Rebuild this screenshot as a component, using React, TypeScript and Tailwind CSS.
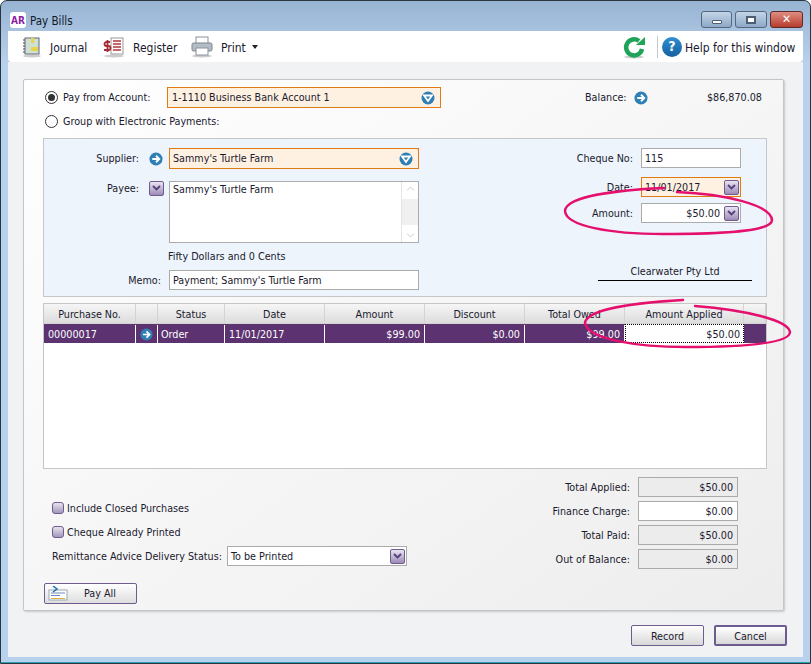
import React from 'react';

const ink = 'text-[#1a1a2e]';

function ArrowIcon({ size = 15 }: { size?: number }) {
  return (
    <svg width={size} height={size} viewBox="0 0 15 15" className="shrink-0">
      <circle cx="7.5" cy="7.5" r="7" fill="#2f7fb5" />
      <path d="M3.5 7.5h6.5M7.5 4l3.5 3.5L7.5 11" fill="none" stroke="#fff" strokeWidth="2" />
    </svg>
  );
}

function DownCircle() {
  return (
    <svg width="14" height="14" viewBox="0 0 14 14" className="shrink-0">
      <circle cx="7" cy="7" r="6.5" fill="#2f7fb5" />
      <path d="M3 4.5h8L7 10z" fill="none" stroke="#fff" strokeWidth="1.8" />
    </svg>
  );
}

function PurpleDrop() {
  return (
    <div className="flex h-[15px] w-[15px] shrink-0 items-center justify-center rounded-[2px] border border-[#6f5c8e] bg-gradient-to-b from-[#e9e4f0] to-[#9d8bb6]">
      <svg width="9" height="7" viewBox="0 0 9 7">
        <path d="M1 1l3.5 3.5L8 1" fill="none" stroke="#54407a" strokeWidth="1.8" />
      </svg>
    </div>
  );
}

function Check({ label }: { label: string }) {
  return (
    <div className="flex h-[16px] items-center pl-[9px]">
      <div className="h-[12px] w-[12px] rounded-[3px] border border-[#6f5c8e] bg-gradient-to-b from-[#e8e3ee] to-[#a597bb]" />
      <span className="ml-[3px]">{label}</span>
    </div>
  );
}

function Field({ children, className = '' }: { children?: React.ReactNode; className?: string }) {
  return (
    <div className={`flex items-center border border-[#ababab] px-[3px] ${className}`}>
      {children}
    </div>
  );
}

function TotalRow({ label, value, live }: { label: string; value: string; live?: boolean }) {
  return (
    <div className="flex h-[20px] items-center justify-end">
      <span className="mr-[8px]">{label}</span>
      <Field className={`h-[20px] w-[100px] justify-end pr-[4px] ${live ? 'bg-white' : 'bg-[#ececec]'}`}>{value}</Field>
    </div>
  );
}

const columns = [
  { name: 'Purchase No.', w: 'w-[92px]' },
  { name: '', w: 'w-[22px]' },
  { name: 'Status', w: 'w-[67px]' },
  { name: 'Date', w: 'w-[100px]' },
  { name: 'Amount', w: 'w-[100px]' },
  { name: 'Discount', w: 'w-[100px]' },
  { name: 'Total Owed', w: 'w-[100px]' },
  { name: 'Amount Applied', w: 'w-[119px]' },
  { name: '', w: 'flex-1' },
];

export default function App() {
  return (
    <div className="h-[664px] w-[811px] overflow-hidden bg-white font-['DejaVu_Sans_Condensed','Noto_Sans',sans-serif] text-[10.7px] leading-[13px] text-[#1a1a2e]">
      <div className="relative flex h-[664px] w-[811px] flex-col rounded-t-[7px] border border-[#2a3540] bg-[linear-gradient(#98b4d3,#b8d1ec_62px)] pr-[7px] pl-[7px]">
        {/* title bar */}
        <div className="flex h-[30px] shrink-0 items-end pb-[3px]">
          <div className="ml-[2px] flex h-[16px] w-[16px] items-center justify-center rounded-[3px] bg-white text-[10px] font-bold text-[#8a1fa5]">AR</div>
          <span className="ml-[4px] text-[11.5px] text-[#10182a]">Pay Bills</span>
          <div className="ml-auto flex gap-[3px]">
            <div className="flex h-[17px] w-[31px] items-center justify-center rounded-[3px] border border-[#55677c] bg-gradient-to-b from-[#c3d5e8] to-[#8ea9c6]">
              <div className="mt-[4px] h-[4px] w-[10px] rounded-[1px] border border-[#4c5e75] bg-white" />
            </div>
            <div className="flex h-[17px] w-[32px] items-center justify-center rounded-[3px] border border-[#55677c] bg-gradient-to-b from-[#c3d5e8] to-[#8ea9c6]">
              <div className="h-[8px] w-[10px] border-2 border-[#4c5e75] bg-white" />
            </div>
            <div className="flex h-[17px] w-[33px] items-center justify-center rounded-[3px] border border-[#5f2a28] bg-gradient-to-b from-[#dd8d80] to-[#b53a2c] text-[12px] font-bold text-white">✕</div>
          </div>
        </div>

        {/* toolbar */}
        <div className={`flex h-[31px] shrink-0 items-center rounded-b-[4px] bg-white text-[12px] ${ink}`}>
          <svg width="20" height="22" viewBox="0 0 20 22" className="ml-[14px]">
            <ellipse cx="10" cy="20" rx="9" ry="1.5" fill="#ccc" />
            <rect x="3" y="2" width="14" height="16" fill="#cfe0d4" stroke="#667" />
            <path d="M3 4h-2M3 7h-2M3 10h-2M3 13h-2M3 16h-2" stroke="#445" />
            <rect x="9" y="2" width="3" height="5" fill="#e8d44a" />
            <rect x="9" y="11" width="7" height="4" fill="#e8d44a" />
          </svg>
          <span className="mt-[3px] ml-[8px] w-[38px]">Journal</span>
          <svg width="22" height="22" viewBox="0 0 22 22" className="ml-[15px]">
            <ellipse cx="11" cy="20" rx="10" ry="1.5" fill="#ccc" />
            <rect x="8" y="2" width="12" height="16" fill="#fff" stroke="#999" />
            <path d="M10 5h8M10 8h8M10 11h8M10 14h8" stroke="#b3343c" strokeWidth="1.4" />
            <path d="M7 6H3.5a1.7 1.7 0 0 0 0 4h2a1.7 1.7 0 0 1 0 4H1M4.5 4v12" fill="none" stroke="#a82c35" strokeWidth="1.8" />
          </svg>
          <span className="mt-[3px] ml-[8px] w-[42px]">Register</span>
          <svg width="22" height="22" viewBox="0 0 22 22" className="ml-[16px]">
            <ellipse cx="11" cy="20" rx="10" ry="1.5" fill="#ccc" />
            <rect x="5" y="1" width="12" height="7" fill="#fff" stroke="#8a929c" />
            <rect x="1" y="7" width="20" height="8" rx="1.5" fill="#b4bcc5" stroke="#7d858f" />
            <rect x="5" y="12" width="12" height="7" fill="#fff" stroke="#8a929c" />
          </svg>
          <span className="mt-[3px] ml-[8px] w-[25px]">Print</span>
          <svg width="6" height="4" viewBox="0 0 6 4" className="ml-[6px]"><path d="M0 0h6L3 4z" fill="#222" /></svg>
          <svg width="24" height="24" viewBox="0 0 24 24" className="ml-auto">
            <ellipse cx="12" cy="22" rx="10" ry="1.5" fill="#ccc" />
            <path d="M20 14a8 8 0 1 1-3-8" fill="none" stroke="#1fa25a" strokeWidth="4.5" />
            <path d="M14 10h9V2z" fill="#1fa25a" />
          </svg>
          <div className="mr-[4px] ml-[11px] h-[22px] w-px bg-[#c4c8cc]" />
          <div className="flex h-[20px] w-[20px] items-center justify-center rounded-full bg-gradient-to-b from-[#2f8fd0] to-[#14609f] text-[14px] font-bold text-white">?</div>
          <span className="mt-[3px] ml-[3px] w-[118px]">Help for this window</span>
        </div>

        {/* content */}
        <div className="flex min-h-0 flex-1 flex-col bg-[#f1f2f4] pt-[17px] pr-[19px] pl-[15px]">
          <div className="h-[532px] shrink-0 rounded-[2px] border border-[#c4c6c8] bg-gradient-to-br from-white to-[#ededed] pt-[7px] pr-[16px] pl-[19px] shadow-[1px_1px_2px_#c8c8c8]">
            {/* account row */}
            <div className="flex h-[21px] items-center">
              <div className="ml-[2px] flex h-[13px] w-[13px] items-center justify-center rounded-full border border-[#333] bg-white">
                <div className="h-[7px] w-[7px] rounded-full bg-[#333]" />
              </div>
              <span className="ml-[5px] w-[104px]">Pay from Account:</span>
              <div className="flex h-[21px] w-[274px] items-center justify-between border border-[#e07a14] bg-[#fff1e2] pr-[5px] pl-[4px]">
                1-1110 Business Bank Account 1
                <DownCircle />
              </div>
              <span className="ml-[144px] w-[43px]">Balance:</span>
              <div className="ml-[6px]"><ArrowIcon size={14} /></div>
              <span className="mr-[5px] ml-auto">$86,870.08</span>
            </div>
            <div className="mt-[3px] flex h-[20px] items-center">
              <div className="ml-[2px] h-[13px] w-[13px] rounded-full border border-[#333] bg-white" />
              <span className="ml-[5px]">Group with Electronic Payments:</span>
            </div>

            {/* supplier box */}
            <div className="mt-[7px] flex h-[159px] justify-between border border-[#c4c6c8] bg-[#edf4fb] pt-[9px]">
              <div className="flex flex-col">
                <div className="flex h-[21px] items-center">
                  <span className="w-[95px] text-right">Supplier:</span>
                  <div className="ml-[10px] w-[20px]"><ArrowIcon size={14} /></div>
                  <div className="flex h-[21px] w-[250px] items-center justify-between border border-[#e07a14] bg-[#fff1e2] pr-[5px] pl-[3px]">
                    Sammy's Turtle Farm
                    <DownCircle />
                  </div>
                </div>
                <div className="mt-[12px] flex h-[62px] items-start">
                  <span className="mt-[1px] w-[95px] text-right">Payee:</span>
                  <div className="ml-[10px] w-[20px]"><PurpleDrop /></div>
                  <div className="flex h-[62px] w-[250px] justify-between border border-[#ababab] bg-white pt-[1px] pl-[3px]">
                    Sammy's Turtle Farm
                    <div className="-mt-[1px] flex w-[17px] flex-col items-center justify-between border-l border-[#e4e4e4] py-[4px]">
                      <svg width="9" height="5" viewBox="0 0 9 5"><path d="M1 4.5l3.5-3.5L8 4.5" fill="none" stroke="#ccc" /></svg>
                      <div className="h-[26px] w-full bg-[#f0f0f0]" />
                      <svg width="9" height="5" viewBox="0 0 9 5"><path d="M1 .5l3.5 3.5L8 .5" fill="none" stroke="#ccc" /></svg>
                    </div>
                  </div>
                </div>
                <div className="mt-[6px] h-[14px] pl-[124px] leading-[15px]">Fifty Dollars and 0 Cents</div>
                <div className="mt-[7px] flex h-[20px] items-center">
                  <span className="w-[117px] text-right">Memo:</span>
                  <Field className="ml-[8px] h-[20px] w-[250px] bg-white">Payment; Sammy's Turtle Farm</Field>
                </div>
              </div>
              <div className="flex w-[220px] flex-col pr-[25px]">
                <div className="flex h-[20px] items-center justify-end">
                  <span className="mr-[8px]">Cheque No:</span>
                  <Field className="h-[20px] w-[100px] bg-white">115</Field>
                </div>
                <div className="mt-[9px] flex h-[20px] items-center justify-end">
                  <span className="mr-[8px]">Date:</span>
                  <div className="flex h-[20px] w-[100px] items-center justify-between border border-[#e07a14] bg-[#fff1e2] pr-[1px] pl-[3px]">
                    11/01/2017
                    <PurpleDrop />
                  </div>
                </div>
                <div className="mt-[6px] flex h-[20px] items-center justify-end">
                  <span className="mr-[8px]">Amount:</span>
                  <div className="flex h-[20px] w-[100px] items-center justify-end gap-[4px] border border-[#ababab] bg-white pr-[1px]">
                    $50.00
                    <PurpleDrop />
                  </div>
                </div>
                <div className="mt-[43px] ml-[52px] w-[154px] border-b border-black pb-[2px] text-center leading-[12px]">Clearwater Pty Ltd</div>
              </div>
            </div>

            {/* bills table */}
            <div className="mt-[6px] h-[166px] border border-[#c4c6c8] bg-white">
              <div className="flex h-[20px]">
                {columns.map((c, i) => (
                  <div key={i} className={`${c.w} flex items-center justify-center border-r border-b border-[#d4d4d4] bg-gradient-to-b from-[#f6f6f6] to-[#dcdcdc] pt-px`}>{c.name}</div>
                ))}
              </div>
              <div className="flex h-[20px] border-b border-white bg-[#5c3270] pt-px text-white">
                <div className="flex w-[92px] items-center border-r border-white pl-[4px]">00000017</div>
                <div className="flex w-[22px] items-center justify-center border-r border-white"><ArrowIcon size={13} /></div>
                <div className="flex w-[67px] items-center border-r border-white pl-[3px]">Order</div>
                <div className="flex w-[100px] items-center border-r border-white pl-[4px]">11/01/2017</div>
                <div className="flex w-[100px] items-center justify-end border-r border-white pr-[4px]">$99.00</div>
                <div className="flex w-[100px] items-center justify-end border-r border-white pr-[4px]">$0.00</div>
                <div className="flex w-[100px] items-center justify-end border-r border-white pr-[4px]">$99.00</div>
                <div className="-mt-px flex w-[119px] items-center justify-end border border-dotted border-black bg-white pt-px pr-[3px] text-[#1a1a2e]">$50.00</div>
              </div>
            </div>

            {/* bottom part */}
            <div className="flex justify-between">
              <div className="flex flex-col pt-[31px]">
                <Check label="Include Closed Purchases" />
                <div className="mt-[8px]"><Check label="Cheque Already Printed" /></div>
                <div className="mt-[6px] flex h-[20px] items-center pl-[9px]">
                  <span className="mr-[6px] w-[169px] whitespace-nowrap">Remittance Advice Delivery Status:</span>
                  <div className="flex h-[20px] w-[180px] items-center justify-between border border-[#ababab] bg-white pr-[1px] pl-[3px]">
                    To be Printed
                    <PurpleDrop />
                  </div>
                </div>
                <div className="mt-[17px] ml-px flex h-[21px] w-[93px] items-center rounded-[2px] border border-[#6f5c8e] bg-gradient-to-b from-white to-[#dedede] pl-[3px]">
                  <svg width="20" height="15" viewBox="0 0 20 15" className="shrink-0">
                    <rect x="1" y="4" width="18" height="10" fill="#fff" stroke="#9aa7b5" />
                    <path d="M3 7h14M3 9.5h9" stroke="#6b8db3" />
                    <path d="M3 12.5h14" stroke="#e0b43c" />
                    <path d="M5 0l4 3-4 3" fill="none" stroke="#1d6fb0" strokeWidth="1.5" />
                  </svg>
                  <span className="ml-[16px]">Pay All</span>
                </div>
              </div>
              <div className="flex flex-col gap-[4px] pt-[8px] pr-[29px]">
                <TotalRow label="Total Applied:" value="$50.00" />
                <TotalRow label="Finance Charge:" value="$0.00" live />
                <TotalRow label="Total Paid:" value="$50.00" />
                <TotalRow label="Out of Balance:" value="$0.00" />
              </div>
            </div>
          </div>

          {/* footer */}
          <div className="-mr-[3px] mt-[14px] flex justify-end gap-[10px]">
            <div className="flex h-[21px] w-[73px] items-center justify-center rounded-[2px] border border-[#6f5c8e] bg-gradient-to-b from-white to-[#d8d8d8] pt-px">Record</div>
            <div className="flex h-[21px] w-[73px] items-center justify-center rounded-[2px] border-2 border-[#6f5c8e] bg-gradient-to-b from-white to-[#d8d8d8] pt-px">Cancel</div>
          </div>
        </div>
        <div className="h-[5px] shrink-0" />
        <div className="-mx-[7px] h-px shrink-0 bg-[#2aa0b0]" />

        {/* hand-drawn marks over the form */}
        <svg className="pointer-events-none absolute -top-px -left-px" width="811" height="664" viewBox="0 0 811 664">
          <path d="M664 188C620 190 566 196 565 211C566 226 610 234 663 234C720 234 772 232 772 220C771 205 725 194 677 192" fill="none" stroke="#e5106e" strokeWidth="2.5" strokeLinecap="round" />
          <path d="M683 300C630 303 586 310 585 323C588 340 640 347 685 347C740 347 790 344 790 332C788 320 745 310 695 306" fill="none" stroke="#e5106e" strokeWidth="2.5" strokeLinecap="round" />
        </svg>
      </div>
    </div>
  );
}
